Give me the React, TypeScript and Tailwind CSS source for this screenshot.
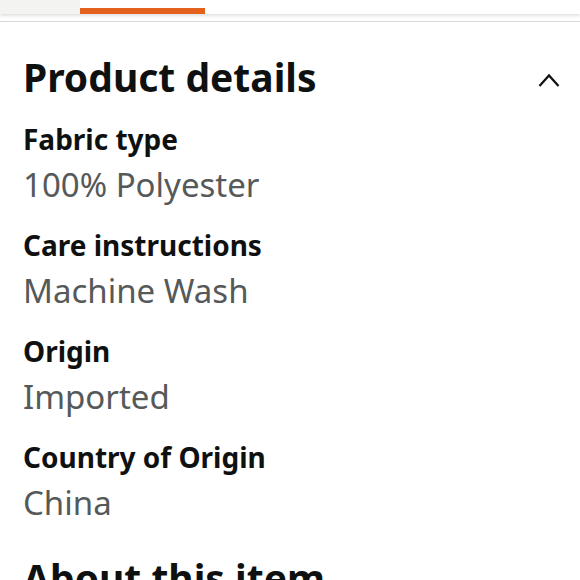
import React from 'react';

const details = [
  { label: 'Fabric type', value: '100% Polyester' },
  { label: 'Care instructions', value: 'Machine Wash' },
  { label: 'Origin', value: 'Imported' },
  { label: 'Country of Origin', value: 'China' },
];

const font = { fontFamily: '"Noto Sans", "Liberation Sans", sans-serif' };

const App: React.FC = () => {
  return (
    <div className="w-[580px] h-[580px] overflow-hidden bg-white" style={font}>
      {/* タブのインジケーター */}
      <div className="relative">
        <div className="flex h-[14px] shadow-[0_2px_3px_rgba(0,0,0,0.12)]">
          <div className="w-[80px] bg-[#f3f3f1]" />
          <div className="w-[125px] flex flex-col justify-end">
            <div className="h-[6px] bg-[#e4621e]" />
          </div>
          <div className="flex-1" />
        </div>
        <div className="h-[7px]" />
        <div className="h-[1px] bg-[#d5d9d9]" />
      </div>

      <div className="px-[23px] pt-[30px]">
        <div className="flex items-center justify-between h-[50px]">
          <h2 className="text-[39px] font-bold text-[#0f1111] leading-[50px]">Product details</h2>
          <svg width="24" height="16" viewBox="0 0 24 16" className="mr-[-4px] mt-[8px]">
            <path d="M2.5 13 L12 2.5 L21.5 13" fill="none" stroke="#0f1111" strokeWidth="2.2" />
          </svg>
        </div>

        <div className="mt-[15px]">
          {details.map((item) => (
            <div key={item.label} className="mb-[16px]">
              <div className="text-[28px] font-bold text-[#0f1111] leading-[45px]">{item.label}</div>
              <div className="text-[33px] text-[#565959] leading-[45px]">{item.value}</div>
            </div>
          ))}
        </div>

        <h2 className="mt-[28px] text-[39px] font-bold text-[#0f1111] leading-[50px] whitespace-nowrap">About this item</h2>
      </div>
    </div>
  );
};

export default App;
